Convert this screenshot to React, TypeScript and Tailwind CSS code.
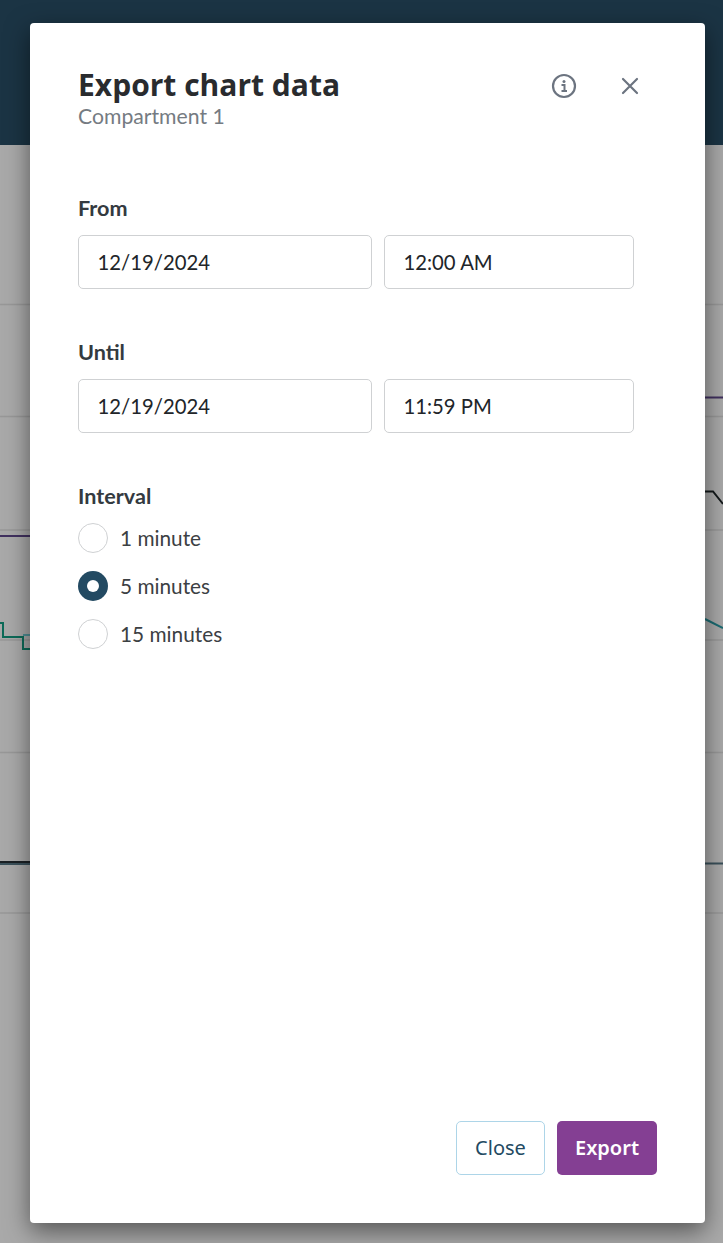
import React from "react";

function Field({ value, className }: { value: string; className: string }) {
  return (
    <div className={`h-[54px] flex items-center rounded-[5px] border border-[#cfd1d3] bg-white pl-[18.5px] text-[20.3px] text-[#212529] ${className}`}>
      {value}
    </div>
  );
}

function Radio({ label, checked }: { label: string; checked?: boolean }) {
  return (
    <div className="h-[48px] flex items-center">
      {checked ? (
        <div className="w-[30px] h-[30px] rounded-full bg-[#234a62] flex items-center justify-center">
          <div className="w-[12px] h-[12px] rounded-full bg-white" />
        </div>
      ) : (
        <div className="w-[30px] h-[30px] rounded-full border border-[#cfd1d3] bg-white" />
      )}
      <span className="ml-[12px] text-[20.8px] text-[#3c4043]">{label}</span>
    </div>
  );
}

function DateRow({ label, time }: { label: string; time: string }) {
  return (
    <div>
      <div className="text-[21.6px] leading-[24px] font-bold text-[#343a40]">{label}</div>
      <div className="mt-[15px] flex gap-[12px]">
        <Field value="12/19/2024" className="w-[294px]" />
        <Field value={time} className="w-[250px]" />
      </div>
    </div>
  );
}

export default function App() {
  return (
    <div className="relative w-[723px] h-[1243px] overflow-hidden bg-[#a9a9a9] font-['Lato','Liberation_Sans',sans-serif]">
      <div className="h-[145px] bg-[#1b3444]" />
      <svg className="absolute left-0 top-0" width="723" height="1243" fill="none">
        <g stroke="#989898" strokeWidth="1.500">
          <path d="M0 304.500H723M0 416.500H723M0 530H723M0 640H723M0 752.500H723M0 913H723" />
        </g>
        <path d="M0 536H30M705 397.500H723" stroke="#40305f" strokeWidth="2" />
        <path d="M705 491.500H713L723 504" stroke="#141a1b" strokeWidth="2" />
        <path d="M705 619L723 628" stroke="#1a6b72" strokeWidth="2" />
        <path d="M0 623H3V637H23V649H30" stroke="#0c6a58" strokeWidth="2" />
        <path d="M23 635H30" stroke="#4f8f95" strokeWidth="2" />
        <path d="M0 862H30" stroke="#1a2024" strokeWidth="2" />
        <path d="M0 864H30M705 863.500H723" stroke="#3a505a" strokeWidth="2" />
      </svg>

      <div className="absolute left-[30px] top-[23px] w-[675px] h-[1200px] rounded-[4px] bg-white shadow-[0_8px_24px_rgba(0,0,0,0.5)] flex flex-col pl-[48px] pr-[48px] pt-[45px] pb-[48px]">
        <div className="flex items-start justify-between">
          <div>
            <div className="font-['Open_Sans',sans-serif] text-[30px] leading-[34px] font-bold text-[#292b2e]">
              Export chart data
            </div>
            <div className="text-[21.2px] leading-[24px] mt-[2px] text-[#757b82]">Compartment 1</div>
          </div>
          <div className="relative w-[100px] h-[34px] mr-[17px]">
            <svg className="absolute left-[11px] top-[5px]" width="26" height="26" viewBox="0 0 26 26" fill="none">
              <circle cx="13" cy="13" r="11" stroke="#6c7480" strokeWidth="2.200" />
              <circle cx="13" cy="8.500" r="1.500" fill="#6c7480" />
              <path d="M10.500 12H13.500V17.500M10.500 18H16" stroke="#6c7480" strokeWidth="2" />
            </svg>
            <svg className="absolute left-[81px] top-[9px]" width="18" height="18" viewBox="0 0 18 18" fill="none">
              <path d="M2 2L16 16M16 2L2 16" stroke="#6c7480" strokeWidth="2.200" strokeLinecap="round" />
            </svg>
          </div>
        </div>

        <div className="mt-[68px] flex flex-col gap-[51px]">
          <DateRow label="From" time="12:00 AM" />
          <DateRow label="Until" time="11:59 PM" />
        </div>

        <div className="mt-[51px]">
          <div className="text-[21.6px] leading-[24px] font-bold text-[#343a40]">Interval</div>
          <div className="mt-[6px]">
            <Radio label="1 minute" />
            <Radio label="5 minutes" checked />
            <Radio label="15 minutes" />
          </div>
        </div>

        <div className="mt-auto flex justify-end gap-[12px] font-['Noto_Sans',sans-serif]">
          <button className="h-[54px] w-[89px] rounded-[5px] border border-[#add5e8] bg-white text-[20px] text-[#234a62]">
            Close
          </button>
          <button className="h-[54px] w-[100px] rounded-[5px] bg-[#843f93] text-[20px] font-semibold text-white">
            Export
          </button>
        </div>
      </div>
    </div>
  );
}
